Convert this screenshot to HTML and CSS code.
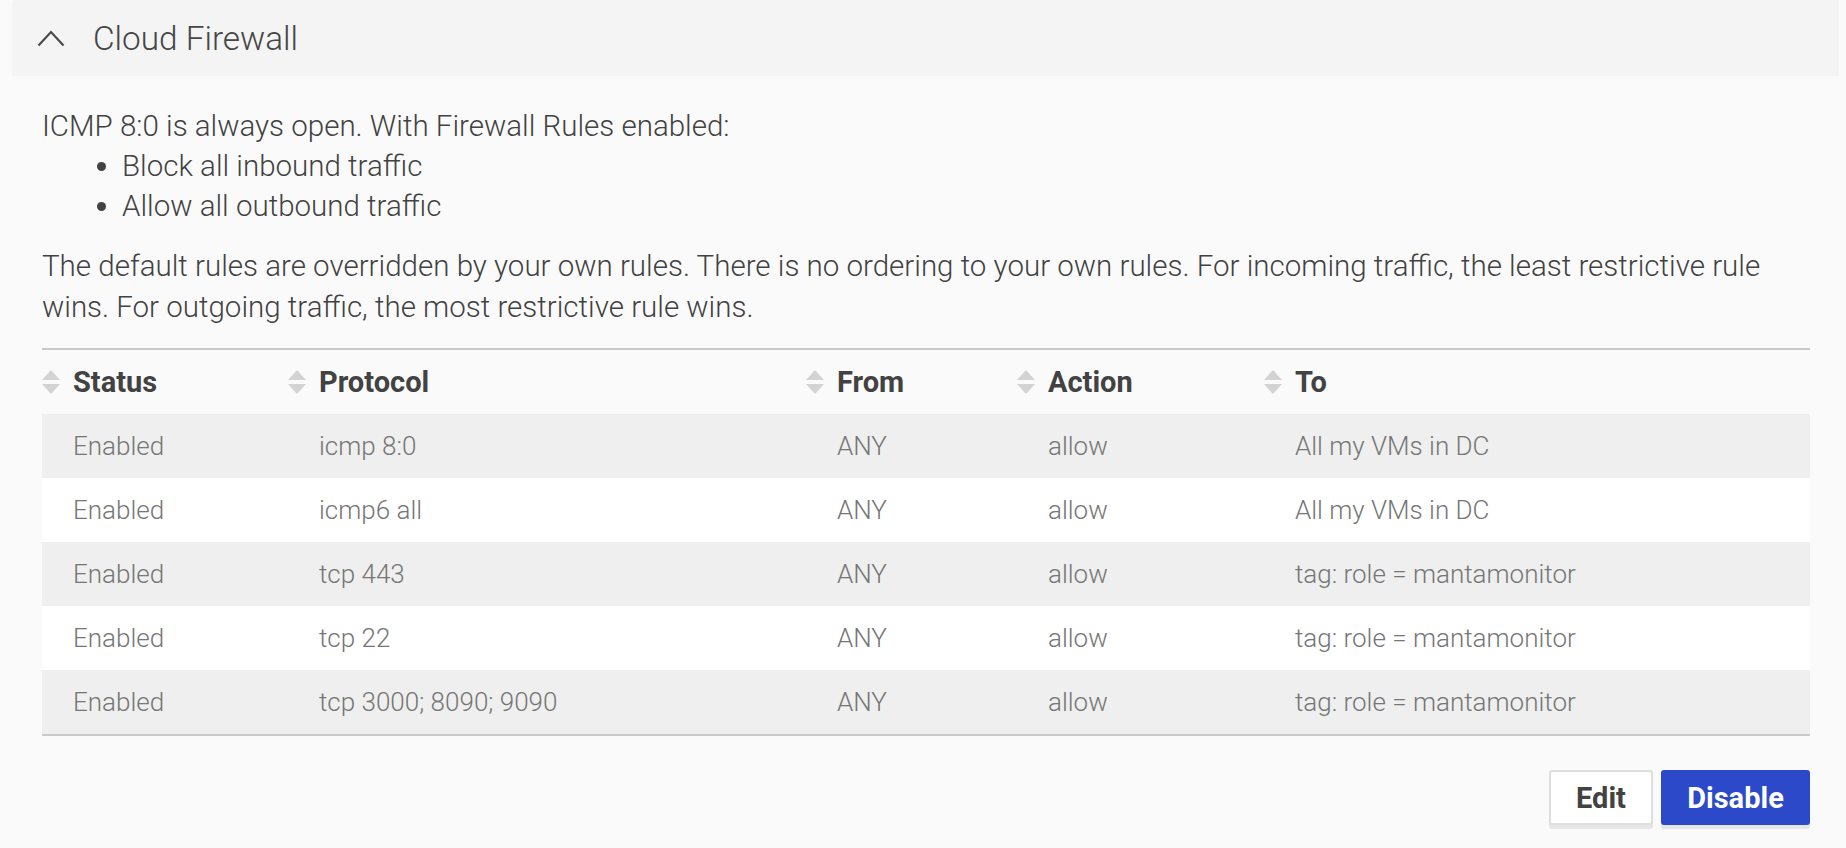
FILE: index.html
```html
<!DOCTYPE html>
<html>
<head>
<meta charset="utf-8">
<link rel="stylesheet" href="styles.css">
</head>
<body>
<div class="panel">
  <div class="panel-head">
    <svg class="chev" width="28" height="19" viewBox="0 0 28 19"><polyline points="1.5,17.5 14,4 26.5,17.5" fill="none" stroke="#4a4a4a" stroke-width="2.2"/></svg>
    <span class="panel-title">Cloud Firewall</span>
  </div>
  <div class="panel-body">
    <p class="intro">ICMP 8:0 is always open. With Firewall Rules enabled:</p>
    <ul class="defaults">
      <li>Block all inbound traffic</li>
      <li>Allow all outbound traffic</li>
    </ul>
    <p class="note">The default rules are overridden by your own rules. There is no ordering to your own rules. For incoming traffic, the least restrictive rule wins. For outgoing traffic, the most restrictive rule wins.</p>

    <div class="rules">
      <div class="row head">
        <div class="cell"><span class="sort"><i class="up"></i><i class="down"></i></span>Status</div>
        <div class="cell"><span class="sort"><i class="up"></i><i class="down"></i></span>Protocol</div>
        <div class="cell"><span class="sort"><i class="up"></i><i class="down"></i></span>From</div>
        <div class="cell"><span class="sort"><i class="up"></i><i class="down"></i></span>Action</div>
        <div class="cell"><span class="sort"><i class="up"></i><i class="down"></i></span>To</div>
      </div>
      <div class="row alt">
        <div class="cell">Enabled</div><div class="cell">icmp 8:0</div><div class="cell">ANY</div><div class="cell">allow</div><div class="cell">All my VMs in DC</div>
      </div>
      <div class="row">
        <div class="cell">Enabled</div><div class="cell">icmp6 all</div><div class="cell">ANY</div><div class="cell">allow</div><div class="cell">All my VMs in DC</div>
      </div>
      <div class="row alt">
        <div class="cell">Enabled</div><div class="cell">tcp 443</div><div class="cell">ANY</div><div class="cell">allow</div><div class="cell">tag: role = mantamonitor</div>
      </div>
      <div class="row">
        <div class="cell">Enabled</div><div class="cell">tcp 22</div><div class="cell">ANY</div><div class="cell">allow</div><div class="cell">tag: role = mantamonitor</div>
      </div>
      <div class="row alt">
        <div class="cell">Enabled</div><div class="cell">tcp 3000; 8090; 9090</div><div class="cell">ANY</div><div class="cell">allow</div><div class="cell">tag: role = mantamonitor</div>
      </div>
    </div>

    <div class="actions">
      <button class="btn btn-secondary">Edit</button>
      <button class="btn btn-primary">Disable</button>
    </div>
  </div>
</div>
</body>
</html>
```

FILE: styles.css
```css
html, body {
  margin: 0;
  padding: 0;
  background: #fafafa;
}
body {
  font-family: Roboto, "Liberation Sans", sans-serif;
  color: #424242;
  width: 1846px;
  height: 848px;
  overflow: hidden;
}
.panel-head {
  margin: 0 7px 0 12px;
  height: 76px;
  background: #f4f4f4;
  display: flex;
  align-items: center;
  padding-left: 25px;
  border-top-left-radius: 4px;
}
.chev {
  display: block;
  margin-top: -1px;
}
.panel-title {
  margin-left: 28px;
  font-size: 33.3px;
  font-weight: 300;
  color: #464646;
}
.panel-body {
  padding: 0 36px 0 42px;
}
.intro, .note {
  margin: 0;
  font-size: 29.5px;
  font-weight: 300;
  line-height: 40px;
}
.intro {
  margin-top: 30px;
}
.defaults {
  margin: 0;
  padding-left: 80px;
  font-size: 29.5px;
  font-weight: 300;
  line-height: 40px;
}
.note {
  margin-top: 20px;
  line-height: 40.5px;
}
.rules {
  margin-top: 21px;
  border-top: 2px solid #c9c9c9;
  border-bottom: 2px solid #c9c9c9;
}
.row {
  display: grid;
  grid-template-columns: 246px 518px 211px 247px 1fr;
  height: 64px;
  align-items: center;
  background: #ffffff;
}
.row.alt {
  background: #efefef;
}
.row.head {
  background: #fafafa;
  height: 64px;
}
.cell {
  padding-left: 31px;
  font-size: 26px;
  font-weight: 300;
  color: #767676;
  white-space: nowrap;
  display: flex;
  align-items: center;
}
.head .cell {
  padding-left: 0;
  font-size: 29px;
  font-weight: 700;
  color: #424242;
}
.sort {
  width: 31px;
  display: flex;
  flex-direction: column;
  gap: 4px;
}
.sort i {
  display: block;
  width: 0;
  height: 0;
  border-left: 9px solid transparent;
  border-right: 9px solid transparent;
}
.sort .up {
  border-bottom: 10px solid #d3d3d3;
}
.sort .down {
  border-top: 10px solid #d3d3d3;
}
.actions {
  display: flex;
  justify-content: flex-end;
  gap: 8px;
  margin-top: 34px;
}
.btn {
  font-family: Roboto, "Liberation Sans", sans-serif;
  font-size: 29px;
  font-weight: 700;
  height: 55px;
  border-radius: 3px;
  padding: 0;
  cursor: pointer;
}
.btn-secondary {
  width: 104px;
  background: #ffffff;
  color: #424242;
  border: 2px solid #dedede;
  box-shadow: 0 4px 0 #e6e6e6;
}
.btn-primary {
  width: 149px;
  background: #2b49c8;
  color: #ffffff;
  border: 2px solid #2b49c8;
  box-shadow: 0 4px 0 #e6e6e6;
}
```
